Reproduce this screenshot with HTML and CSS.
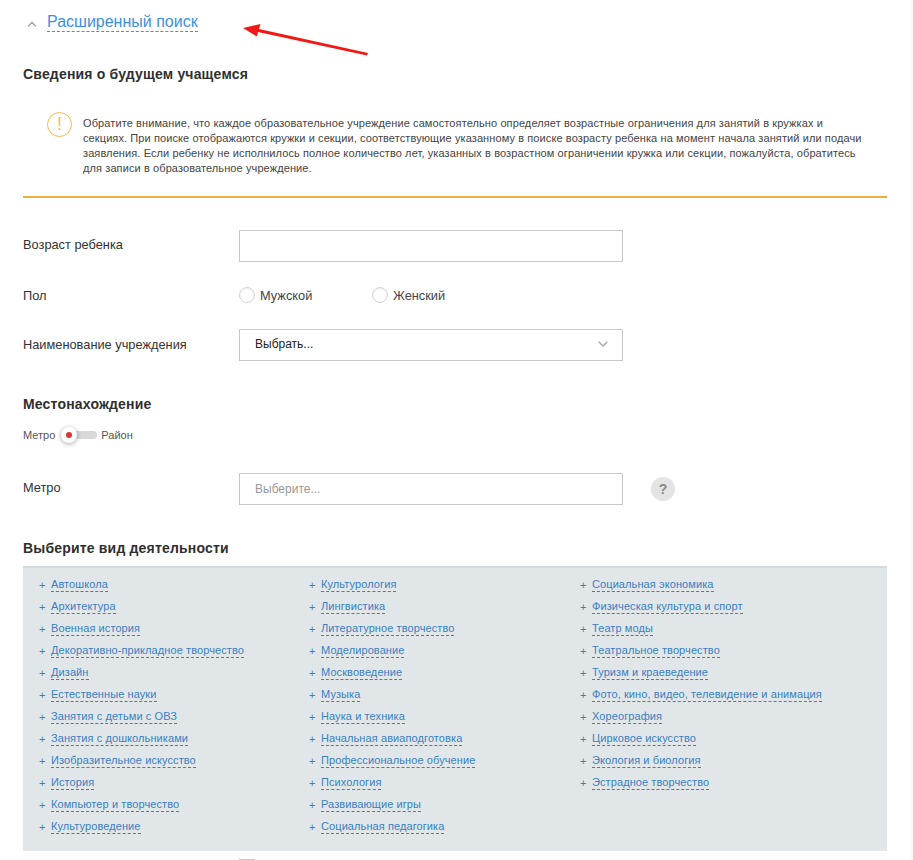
FILE: index.html
```html
<!DOCTYPE html>
<html lang="ru">
<head>
    <meta charset="UTF-8">
    <title>Расширенный поиск</title>
    <link rel="stylesheet" href="styles.css">
</head>
<body>
    <div class="page">
        <div class="toggle-head">
            <svg class="chevron-up" width="10" height="6" viewBox="0 0 10 6"><path d="M1 5.5 L5 1.5 L9 5.5" fill="none" stroke="#aaa" stroke-width="1.6"/></svg>
            <a class="toggle-link">Расширенный поиск</a>
        </div>
        <svg class="arrow" width="130" height="34" viewBox="0 0 130 34"><path d="M127 29 L18 5 L19.5 0 L2 4 L16 12.5 L17 8 L126 31.5 Z" fill="#f21818"/></svg>

        <h2 class="section-title first">Сведения о будущем учащемся</h2>

        <div class="notice">
            <div class="notice-icon">!</div>
            <p>Обратите внимание, что каждое образовательное учреждение самостоятельно определяет возрастные ограничения для занятий в кружках и секциях. При поиске отображаются кружки и секции, соответствующие указанному в поиске возрасту ребенка на момент начала занятий или подачи заявления. Если ребенку не исполнилось полное количество лет, указанных в возрастном ограничении кружка или секции, пожалуйста, обратитесь для записи в образовательное учреждение.</p>
        </div>

        <div class="form-row row-age">
            <label>Возраст ребенка</label>
            <div class="field"></div>
        </div>
        <div class="form-row row-sex">
            <label>Пол</label>
            <div class="radio-group">
                <span class="radio"><i></i>Мужской</span>
                <span class="radio"><i></i>Женский</span>
            </div>
        </div>
        <div class="form-row row-org">
            <label>Наименование учреждения</label>
            <div class="field select">
                <span>Выбрать...</span>
                <svg width="10" height="6" viewBox="0 0 10 6"><path d="M0.8 0.8 L5 5 L9.2 0.8" fill="none" stroke="#aaa" stroke-width="1.5"/></svg>
            </div>
        </div>

        <h2 class="section-title place">Местонахождение</h2>
        <div class="switch-row">
            <span>Метро</span>
            <div class="switch"><div class="knob"></div></div>
            <span>Район</span>
        </div>
        <div class="form-row row-metro">
            <label>Метро</label>
            <div class="field placeholder">Выберите...</div>
            <div class="help">?</div>
        </div>

        <h2 class="section-title activity">Выберите вид деятельности</h2>
        <div class="activities">
            <ul>
                <li><a>Автошкола</a></li>
                <li><a>Архитектура</a></li>
                <li><a>Военная история</a></li>
                <li><a>Декоративно-прикладное творчество</a></li>
                <li><a>Дизайн</a></li>
                <li><a>Естественные науки</a></li>
                <li><a>Занятия с детьми с ОВЗ</a></li>
                <li><a>Занятия с дошкольниками</a></li>
                <li><a>Изобразительное искусство</a></li>
                <li><a>История</a></li>
                <li><a>Компьютер и творчество</a></li>
                <li><a>Культуроведение</a></li>
            </ul>
            <ul>
                <li><a>Культурология</a></li>
                <li><a>Лингвистика</a></li>
                <li><a>Литературное творчество</a></li>
                <li><a>Моделирование</a></li>
                <li><a>Москвоведение</a></li>
                <li><a>Музыка</a></li>
                <li><a>Наука и техника</a></li>
                <li><a>Начальная авиаподготовка</a></li>
                <li><a>Профессиональное обучение</a></li>
                <li><a>Психология</a></li>
                <li><a>Развивающие игры</a></li>
                <li><a>Социальная педагогика</a></li>
            </ul>
            <ul>
                <li><a>Социальная экономика</a></li>
                <li><a>Физическая культура и спорт</a></li>
                <li><a>Театр моды</a></li>
                <li><a>Театральное творчество</a></li>
                <li><a>Туризм и краеведение</a></li>
                <li><a>Фото, кино, видео, телевидение и анимация</a></li>
                <li><a>Хореография</a></li>
                <li><a>Цирковое искусство</a></li>
                <li><a>Экология и биология</a></li>
                <li><a>Эстрадное творчество</a></li>
            </ul>
        </div>
        <div class="checkbox-row"><div class="checkbox"></div></div>
    </div>
</body>
</html>
```

FILE: styles.css
```css
html, body {
    height: 860px;
    overflow: hidden;
}

body {
    box-sizing: border-box;
    margin: 0;
    background: #ffffff;
    border-right: 2px solid #f7f7f7;
    font-family: 'Liberation Sans', Arial, sans-serif;
    font-size: 13px;
    color: #333333;
}

.page {
    position: relative;
    width: 864px;
    margin-left: 23px;
}

.toggle-head {
    display: flex;
    align-items: center;
    height: 44px;
    padding-left: 4px;
}

.chevron-up {
    margin-right: 10px;
    margin-top: 3px;
}

.toggle-link {
    font-size: 16px;
    color: #3d8fe0;
    border-bottom: 1px dashed #3d8fe0;
    line-height: 19px;
}

.arrow {
    position: absolute;
    left: 218px;
    top: 24px;
}

.section-title {
    margin: 0;
    font-size: 14px;
    font-weight: 700;
    line-height: 20px;
    color: #2f2f2f;
    letter-spacing: 0.18px;
}

.section-title.first {
    margin-top: 20px;
}

.notice {
    display: flex;
    margin-top: 32px;
    padding: 0 0 20px 24px;
    border-bottom: 2px solid #ecb03a;
}

.notice-icon {
    flex: none;
    width: 23px;
    height: 23px;
    border: 1px solid #f6b84b;
    border-radius: 50%;
    margin-top: -4px;
    margin-right: 11px;
    color: #f6b84b;
    font-size: 18px;
    line-height: 23px;
    text-align: center;
}

.notice p {
    margin: 0;
    max-width: 782px;
    font-size: 11px;
    line-height: 15px;
    letter-spacing: 0.1px;
    color: #444444;
}

.form-row {
    display: flex;
    align-items: center;
}

.form-row label {
    flex: none;
    width: 216px;
    font-size: 12.8px;
    color: #333333;
}

.field {
    box-sizing: border-box;
    width: 384px;
    height: 32px;
    border: 1px solid #c8c8c8;
    background: #ffffff;
}

.row-age {
    margin-top: 32px;
}

.row-age label {
    margin-top: -3px;
}

.row-sex {
    margin-top: 19px;
    height: 28px;
}

.radio-group {
    display: flex;
}

.radio {
    display: flex;
    align-items: center;
    width: 133px;
    font-size: 12.8px;
    color: #444444;
}

.radio i {
    box-sizing: border-box;
    width: 16px;
    height: 16px;
    margin-right: 5px;
    border: 1px solid #d4d4d4;
    border-radius: 50%;
    box-shadow: inset 0 1px 2px rgba(0, 0, 0, 0.08);
}

.row-org {
    margin-top: 20px;
}

.row-org label {
    margin-top: -2px;
}

.select {
    display: flex;
    align-items: center;
    justify-content: space-between;
    padding: 0 14px 2px 15px;
    color: #222222;
    font-size: 12px;
}

.section-title.place {
    margin-top: 33px;
}

.switch-row {
    display: flex;
    align-items: center;
    margin-top: 11px;
    font-size: 11px;
    color: #555555;
    height: 20px;
}

.switch {
    position: relative;
    width: 36px;
    height: 8px;
    margin: 0 4px 0 6px;
    background: #d9d9d9;
    border-radius: 4px;
}

.knob {
    position: absolute;
    left: 0;
    top: -4px;
    width: 16px;
    height: 16px;
    border-radius: 50%;
    background: #ffffff;
    box-shadow: 0 1px 5px rgba(0, 0, 0, 0.35);
}

.knob::after {
    content: "";
    position: absolute;
    left: 5px;
    top: 5px;
    width: 6px;
    height: 6px;
    border-radius: 50%;
    background: #dd3333;
}

.row-metro {
    margin-top: 28px;
}

.row-metro label {
    margin-top: -3px;
}

.placeholder {
    padding-left: 15px;
    line-height: 30px;
    font-size: 12px;
    color: #999999;
}

.help {
    width: 24px;
    height: 24px;
    margin-left: 28px;
    border-radius: 50%;
    background: #e4e4e4;
    color: #888888;
    font-size: 14px;
    font-weight: 700;
    line-height: 24px;
    text-align: center;
}

.section-title.activity {
    margin-top: 33px;
}

.activities {
    display: grid;
    grid-template-columns: 270px 271px 1fr;
    height: 274px;
    margin-top: 8px;
    padding: 9px 0 0 16px;
    border-top: 2px solid #d5dadc;
    background: #e1e7e9;
}

.activities ul {
    margin: 0;
    padding: 0;
    list-style: none;
}

.activities li {
    display: flex;
    height: 22px;
    font-size: 11px;
    line-height: 16px;
    letter-spacing: 0.09px;
    color: #3a7fc2;
}

.activities li::before {
    content: "+";
    width: 12px;
    color: #3a7fc2;
}

.activities a {
    align-self: flex-start;
    border-bottom: 1px dashed #3a7fc2;
    line-height: 14px;
}

.checkbox-row {
    margin-top: 8px;
    padding-left: 216px;
}

.checkbox {
    width: 16px;
    height: 16px;
    background: #c8c8c8;
}
```
